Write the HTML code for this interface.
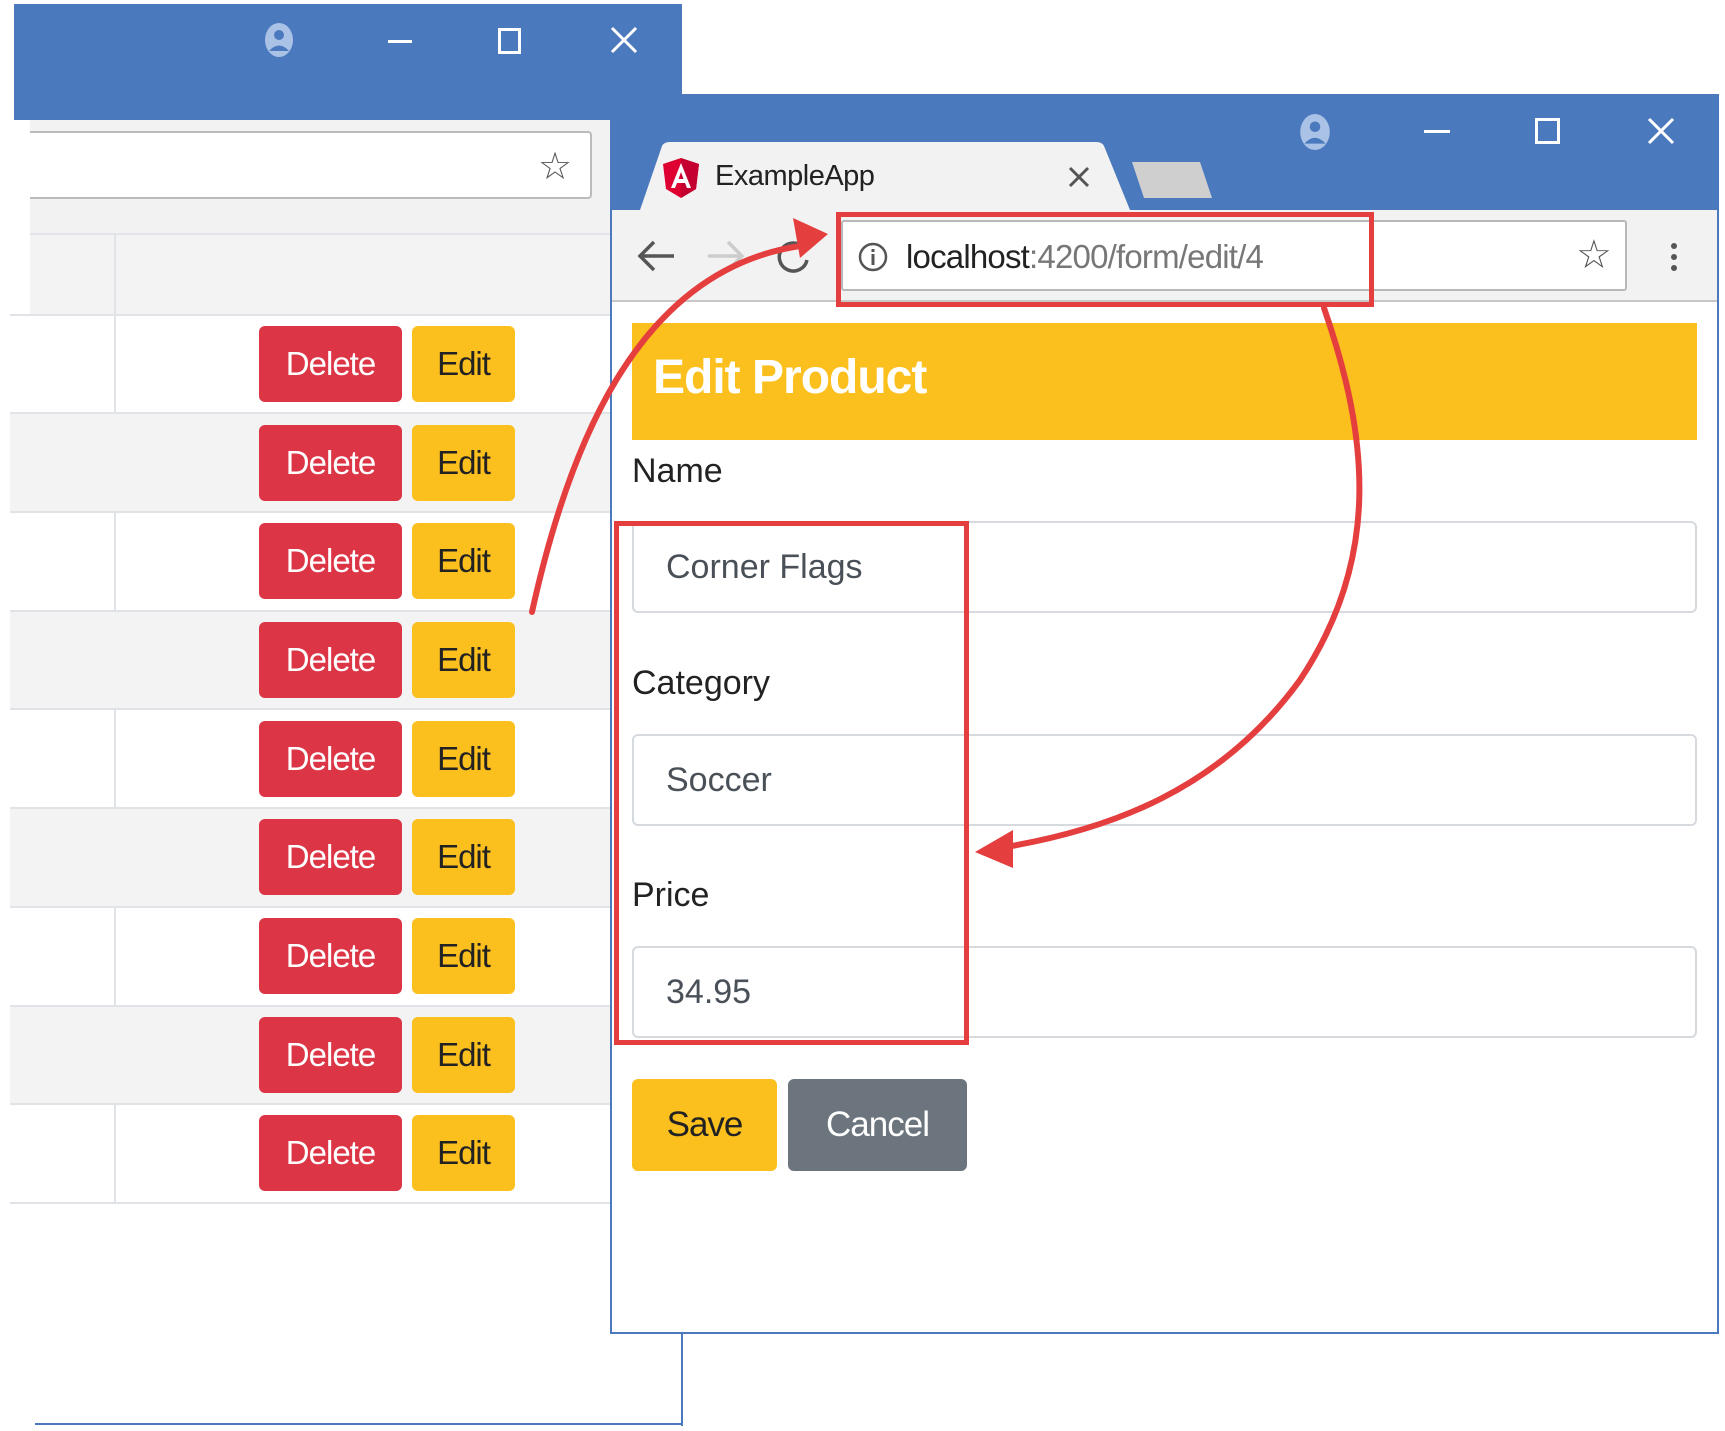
<!DOCTYPE html>
<html><head><meta charset="utf-8"><style>
*{margin:0;padding:0;box-sizing:border-box}
body{width:1725px;height:1431px;background:#fff;position:relative;overflow:hidden;font-family:"Liberation Sans",sans-serif}
.a{position:absolute}
.btn{position:absolute;border-radius:6px;font-size:33px;display:flex;align-items:center;justify-content:center;letter-spacing:-1px}
.del{background:#dc3545;color:#fff;left:259px;width:143px;height:76px}
.edt{background:#fbbf1e;color:#222;left:412px;width:103px;height:76px}
.inp{position:absolute;left:632px;width:1065px;height:92px;border:2px solid #d6d9dd;border-radius:6px;font-size:34px;color:#495057;padding-left:32px;display:flex;align-items:center}
.lbl{position:absolute;left:632px;font-size:34px;color:#222}
</style></head><body>
<!-- back window -->
<div class="a" style="left:14px;top:4px;width:668px;height:116px;background:#4a79bd"></div>
<svg class="a" style="left:264px;top:22px" width="30" height="36" viewBox="0 0 30 36"><ellipse cx="15" cy="18" rx="14" ry="17" fill="#a9c2e6"/><circle cx="15" cy="13" r="5" fill="#4a79bd"/><path d="M5 29 Q15 18 25 29" fill="#4a79bd"/></svg>
<div class="a" style="left:388px;top:40px;width:24px;height:3px;background:#fff"></div>
<div class="a" style="left:498px;top:28px;width:23px;height:26px;border:3px solid #fff"></div>
<svg class="a" style="left:610px;top:26px" width="28" height="28"><path d="M2 2L26 26M26 2L2 26" stroke="#fff" stroke-width="3"/></svg>
<div class="a" style="left:30px;top:120px;width:580px;height:114px;background:#f2f2f2"></div>
<div class="a" style="left:30px;top:131px;width:562px;height:68px;background:#fff;border:2px solid #bbb;border-left:none;border-radius:0 4px 4px 0"></div>
<div class="a" style="left:538px;top:144px;font-size:38px;color:#555">☆</div>
<div class="a" style="left:30px;top:233px;width:580px;height:82px;background:#f3f3f3;border-top:2px solid #e3e5ea"></div>
<div class="a" style="left:114px;top:233px;width:2px;height:970px;background:#e0e3e8"></div>
<div class="a" style="left:10px;top:413px;width:600px;height:99px;background:#f3f3f3"></div>
<div class="a" style="left:10px;top:611px;width:600px;height:99px;background:#f3f3f3"></div>
<div class="a" style="left:10px;top:808px;width:600px;height:99px;background:#f3f3f3"></div>
<div class="a" style="left:10px;top:1006px;width:600px;height:99px;background:#f3f3f3"></div>
<div class="a" style="left:10px;top:314px;width:600px;height:2px;background:#e0e3e8"></div>
<div class="a" style="left:10px;top:412px;width:600px;height:2px;background:#e0e3e8"></div>
<div class="a" style="left:10px;top:511px;width:600px;height:2px;background:#e0e3e8"></div>
<div class="a" style="left:10px;top:610px;width:600px;height:2px;background:#e0e3e8"></div>
<div class="a" style="left:10px;top:708px;width:600px;height:2px;background:#e0e3e8"></div>
<div class="a" style="left:10px;top:807px;width:600px;height:2px;background:#e0e3e8"></div>
<div class="a" style="left:10px;top:906px;width:600px;height:2px;background:#e0e3e8"></div>
<div class="a" style="left:10px;top:1005px;width:600px;height:2px;background:#e0e3e8"></div>
<div class="a" style="left:10px;top:1103px;width:600px;height:2px;background:#e0e3e8"></div>
<div class="a" style="left:10px;top:1202px;width:600px;height:2px;background:#e0e3e8"></div>
<div class="btn del" style="top:326px">Delete</div><div class="btn edt" style="top:326px">Edit</div>
<div class="btn del" style="top:425px">Delete</div><div class="btn edt" style="top:425px">Edit</div>
<div class="btn del" style="top:523px">Delete</div><div class="btn edt" style="top:523px">Edit</div>
<div class="btn del" style="top:622px">Delete</div><div class="btn edt" style="top:622px">Edit</div>
<div class="btn del" style="top:721px">Delete</div><div class="btn edt" style="top:721px">Edit</div>
<div class="btn del" style="top:819px">Delete</div><div class="btn edt" style="top:819px">Edit</div>
<div class="btn del" style="top:918px">Delete</div><div class="btn edt" style="top:918px">Edit</div>
<div class="btn del" style="top:1017px">Delete</div><div class="btn edt" style="top:1017px">Edit</div>
<div class="btn del" style="top:1115px">Delete</div><div class="btn edt" style="top:1115px">Edit</div>
<div class="a" style="left:681px;top:1333px;width:2px;height:93px;background:#4a79bd"></div>
<div class="a" style="left:35px;top:1423px;width:648px;height:2px;background:#4a79bd"></div>
<!-- front window -->
<div class="a" style="left:610px;top:94px;width:1109px;height:1240px;background:#fff;border:2px solid #4a79bd"></div>
<div class="a" style="left:610px;top:94px;width:1109px;height:116px;background:#4a79bd"></div>
<svg class="a" style="left:640px;top:142px" width="600" height="70"><path d="M0 68 L22 4 Q24 0 30 0 L456 0 Q462 0 464 4 L490 68 Z" fill="#f2f2f2"/><path d="M492 20 L560 20 L572 56 L504 56 Z" fill="#cfcfcf"/></svg>
<svg class="a" style="left:663px;top:158px" width="36" height="40" viewBox="0 0 36 40"><path d="M18 0 L36 6 L33 31 L18 40 L3 31 L0 6Z" fill="#dd0031"/><path d="M18 0 L36 6 L33 31 L18 40Z" fill="#c3002f"/><path d="M18 5 L8 30 H12 L14 25 H22 L24 30 H28 Z M15.5 21 L18 14 L20.5 21Z" fill="#fff"/></svg>
<div class="a" style="left:715px;top:160px;font-size:29px;color:#222;letter-spacing:-0.5px">ExampleApp</div>
<svg class="a" style="left:1068px;top:166px" width="22" height="22"><path d="M2 2L20 20M20 2L2 20" stroke="#555" stroke-width="3"/></svg>
<svg class="a" style="left:1298px;top:113px" width="34" height="38" viewBox="0 0 30 36"><ellipse cx="15" cy="18" rx="14" ry="17" fill="#a9c2e6"/><circle cx="15" cy="13" r="5" fill="#4a79bd"/><path d="M5 29 Q15 18 25 29" fill="#4a79bd"/></svg>
<div class="a" style="left:1424px;top:130px;width:26px;height:3px;background:#fff"></div>
<div class="a" style="left:1535px;top:118px;width:25px;height:26px;border:3px solid #fff"></div>
<svg class="a" style="left:1647px;top:117px" width="28" height="28"><path d="M2 2L26 26M26 2L2 26" stroke="#fff" stroke-width="3"/></svg>
<div class="a" style="left:612px;top:210px;width:1105px;height:92px;background:#f2f2f2;border-bottom:2px solid #c8c8c8"></div>
<svg class="a" style="left:636px;top:238px" width="40" height="36"><path d="M38 18H4M18 4L4 18L18 32" fill="none" stroke="#555" stroke-width="3.5"/></svg>
<svg class="a" style="left:706px;top:238px" width="40" height="36"><path d="M2 18H36M22 4L36 18L22 32" fill="none" stroke="#ccc" stroke-width="3.5"/></svg>
<svg class="a" style="left:774px;top:238px" width="40" height="40"><path d="M30 10 A14 14 0 1 0 33 22" fill="none" stroke="#555" stroke-width="3.5"/></svg>
<div class="a" style="left:841px;top:220px;width:786px;height:71px;background:#fff;border:2px solid #b8b8b8;border-radius:3px"></div>
<svg class="a" style="left:857px;top:241px" width="32" height="32"><circle cx="16" cy="16" r="13" fill="none" stroke="#555" stroke-width="2.5"/><rect x="14.5" y="13" width="3" height="11" fill="#555"/><rect x="14.5" y="8" width="3" height="3" fill="#555"/></svg>
<div class="a" style="left:906px;top:238px;font-size:33px;color:#222;letter-spacing:-0.8px">localhost<span style="color:#777">:4200/form/edit/4</span></div>
<div class="a" style="left:1576px;top:232px;font-size:40px;color:#555">☆</div>
<div class="a" style="left:1671px;top:243px;width:6px;height:6px;border-radius:3px;background:#555;box-shadow:0 11px 0 #555,0 22px 0 #555"></div>
<div class="a" style="left:632px;top:323px;width:1065px;height:117px;background:#fbbf1e"></div>
<div class="a" style="left:653px;top:350px;font-size:48px;font-weight:bold;color:#fff;letter-spacing:-1px">Edit Product</div>
<div class="lbl" style="top:452px">Name</div>
<div class="inp" style="top:521px">Corner Flags</div>
<div class="lbl" style="top:664px">Category</div>
<div class="inp" style="top:734px">Soccer</div>
<div class="lbl" style="top:876px">Price</div>
<div class="inp" style="top:946px">34.95</div>
<div class="btn" style="left:632px;top:1079px;width:145px;height:92px;background:#fbbf1e;color:#222;font-size:35px">Save</div>
<div class="btn" style="left:788px;top:1079px;width:179px;height:92px;background:#6c757d;color:#fff;font-size:35px">Cancel</div>
<!-- annotations -->
<div class="a" style="left:836px;top:212px;width:538px;height:95px;border:5px solid #e53e3e"></div>
<div class="a" style="left:614px;top:521px;width:355px;height:524px;border:5px solid #e53e3e"></div>
<svg class="a" style="left:0;top:0" width="1725" height="1431">
<path d="M532 612 C570 440 640 270 800 246" fill="none" stroke="#e53e3e" stroke-width="6" stroke-linecap="round"/>
<path d="M828 234 L793 218 L800 258 Z" fill="#e53e3e"/>
<path d="M1324 308 C1370 440 1380 560 1300 680 C1220 790 1110 830 1000 848" fill="none" stroke="#e53e3e" stroke-width="6" stroke-linecap="round"/>
<path d="M975 852 L1013 830 L1013 868 Z" fill="#e53e3e"/>
</svg>
</body></html>
